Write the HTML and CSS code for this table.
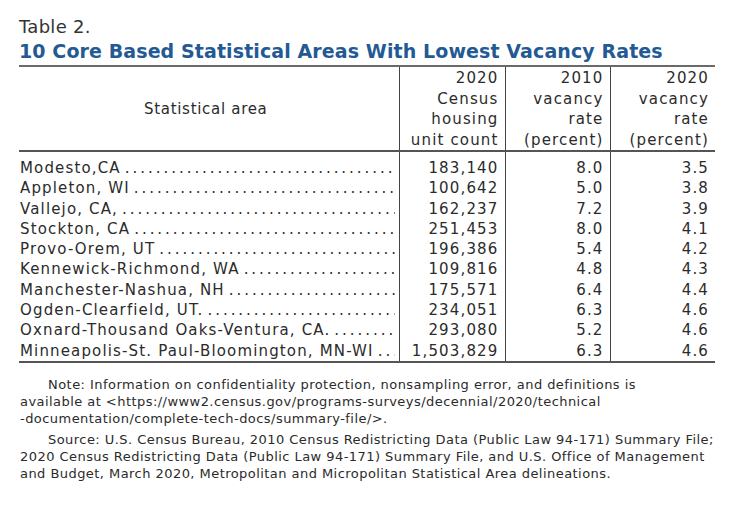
FILE: index.html
```html
<!DOCTYPE html>
<html>
<head>
<meta charset="utf-8">
<link rel="stylesheet" href="styles.css">
</head>
<body>
<div class="page">
  <div class="label">Table 2.</div>
  <div class="title">10 Core Based Statistical Areas With Lowest Vacancy Rates</div>
  <table class="data">
    <colgroup>
      <col class="c1"><col class="c2"><col class="c3"><col class="c4">
    </colgroup>
    <thead>
      <tr>
        <th class="area-h">Statistical area</th>
        <th>2020<br>Census<br>housing<br>unit count</th>
        <th>2010<br>vacancy<br>rate<br>(percent)</th>
        <th>2020<br>vacancy<br>rate<br>(percent)</th>
      </tr>
    </thead>
    <tbody>
      <tr><td class="area"><div class="lead"><span class="name">Modesto,CA</span><span class="dots">. . . . . . . . . . . . . . . . . . . . . . . . . . . . . . . . . . . . . . . . . . . . . . . .</span></div></td><td>183,140</td><td>8.0</td><td>3.5</td></tr>
      <tr><td class="area"><div class="lead"><span class="name">Appleton, WI</span><span class="dots">. . . . . . . . . . . . . . . . . . . . . . . . . . . . . . . . . . . . . . . . . . . . . . . .</span></div></td><td>100,642</td><td>5.0</td><td>3.8</td></tr>
      <tr><td class="area"><div class="lead"><span class="name">Vallejo, CA,</span><span class="dots">. . . . . . . . . . . . . . . . . . . . . . . . . . . . . . . . . . . . . . . . . . . . . . . .</span></div></td><td>162,237</td><td>7.2</td><td>3.9</td></tr>
      <tr><td class="area"><div class="lead"><span class="name">Stockton, CA</span><span class="dots">. . . . . . . . . . . . . . . . . . . . . . . . . . . . . . . . . . . . . . . . . . . . . . . .</span></div></td><td>251,453</td><td>8.0</td><td>4.1</td></tr>
      <tr><td class="area"><div class="lead"><span class="name">Provo-Orem, UT</span><span class="dots">. . . . . . . . . . . . . . . . . . . . . . . . . . . . . . . . . . . . . . . . . . . . . . . .</span></div></td><td>196,386</td><td>5.4</td><td>4.2</td></tr>
      <tr><td class="area"><div class="lead"><span class="name">Kennewick-Richmond, WA</span><span class="dots">. . . . . . . . . . . . . . . . . . . . . . . . . . . . . . . . . . . . . . . . . . . . . . . .</span></div></td><td>109,816</td><td>4.8</td><td>4.3</td></tr>
      <tr><td class="area"><div class="lead"><span class="name">Manchester-Nashua, NH</span><span class="dots">. . . . . . . . . . . . . . . . . . . . . . . . . . . . . . . . . . . . . . . . . . . . . . . .</span></div></td><td>175,571</td><td>6.4</td><td>4.4</td></tr>
      <tr><td class="area"><div class="lead"><span class="name">Ogden-Clearfield, UT.</span><span class="dots">. . . . . . . . . . . . . . . . . . . . . . . . . . . . . . . . . . . . . . . . . . . . . . . .</span></div></td><td>234,051</td><td>6.3</td><td>4.6</td></tr>
      <tr><td class="area"><div class="lead"><span class="name">Oxnard-Thousand Oaks-Ventura, CA.</span><span class="dots">. . . . . . . . . . . . . . . . . . . . . . . . . . . . . . . . . . . . . . . . . . . . . . . .</span></div></td><td>293,080</td><td>5.2</td><td>4.6</td></tr>
      <tr><td class="area"><div class="lead"><span class="name">Minneapolis-St. Paul-Bloomington, MN-WI</span><span class="dots">. . . . . . . . . . . . . . . . . . . . . . . . . . . . . . . . . . . . . . . . . . . . . . . .</span></div></td><td>1,503,829</td><td>6.3</td><td>4.6</td></tr>
    </tbody>
  </table>
  <div class="notes">
    <p>Note: Information on confidentiality protection, nonsampling error, and definitions is<br>available at &lt;https://www2.census.gov/programs-surveys/decennial/2020/technical<br>-documentation/complete-tech-docs/summary-file/&gt;.</p>
    <p>Source: U.S. Census Bureau, 2010 Census Redistricting Data (Public Law 94-171) Summary File;<br>2020 Census Redistricting Data (Public Law 94-171) Summary File, and U.S. Office of Management<br>and Budget, March 2020, Metropolitan and Micropolitan Statistical Area delineations.</p>
  </div>
</div>
</body>
</html>
```

FILE: styles.css
```css
html, body {
  margin: 0;
  padding: 0;
  background: #fff;
}
.page {
  padding: 14px 0 0 19px;
  width: 696px;
  font-family: "DejaVu Sans", "Noto Sans", sans-serif;
  color: #2b2b2b;
}
.label {
  font-size: 18px;
  line-height: 25px;
  color: #333;
  letter-spacing: 0.3px;
}
.title {
  font-size: 19px;
  line-height: 25px;
  font-weight: 700;
  color: #245a93;
  border-bottom: 2px solid #6a6a6a;
  padding-bottom: 1px;
  white-space: nowrap;
  letter-spacing: 0.1px;
}
.data {
  width: 696px;
  border-collapse: collapse;
  table-layout: fixed;
  font-size: 15px;
  letter-spacing: 1.15px;
}
.c1 { width: 380px; }
.c2 { width: 106px; }
.c3 { width: 105px; }
.c4 { width: 105px; }
.data th {
  font-weight: 400;
  text-align: right;
  line-height: 20.5px;
  padding: 1px 6px 0 0;
  border-left: 1.5px solid #444;
  border-bottom: 2px solid #555;
  vertical-align: top;
}
.data th.area-h {
  border-left: none;
  text-align: center;
  vertical-align: middle;
  letter-spacing: 0.7px;
}
.data td {
  text-align: right;
  line-height: 20.3px;
  padding: 0 6px 0 0;
  border-left: 1.5px solid #444;
  white-space: nowrap;
}
.data tbody tr:first-child td { padding-top: 6px; }
.data tbody tr:last-child td { border-bottom: 2px solid #555; }
.data td.area {
  border-left: none;
  text-align: left;
  padding-left: 1px;
  padding-right: 4px;
}
.lead {
  display: flex;
  overflow: hidden;
}
.name { flex: none; }
.dots {
  flex: 1;
  overflow: hidden;
  padding-left: 4px;
  letter-spacing: -0.9px;
}
.notes {
  margin-left: 1px;
  padding-top: 13px;
  font-size: 13px;
  line-height: 17px;
  color: #2b2b2b;
  letter-spacing: 0.45px;
}
.notes p {
  margin: 0 0 4px 0;
  text-indent: 28px;
  white-space: nowrap;
}
```
